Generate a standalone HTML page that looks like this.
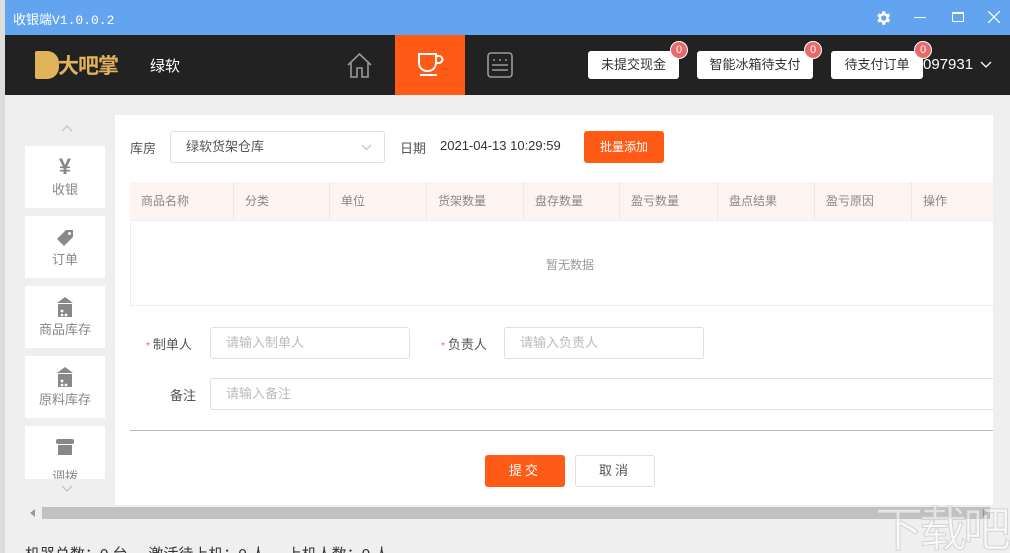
<!DOCTYPE html>
<html><head><meta charset="utf-8"><style>
*{margin:0;padding:0;box-sizing:border-box}
html,body{width:1010px;height:553px;overflow:hidden}
body{background:#efefef;font-family:"Liberation Sans","Noto Sans CJK SC",sans-serif;position:relative;font-size:13px;color:#333}
.a{position:absolute}
.btn{position:absolute;top:51px;height:28px;background:#fff;border-radius:3px;font-size:13px;color:#333;text-align:center;line-height:28px}
.badge{position:absolute;width:18px;height:18px;border-radius:9px;background:#e86a6a;border:1px solid #fff;color:#fff;font-size:11px;text-align:center;line-height:16px;top:-10px;right:-9px}
.nav{position:absolute;left:25px;width:80px;height:62px;background:#fff;text-align:center;color:#888;font-size:13px}
.nav span{position:absolute;left:0;right:0;bottom:10px}
.th{position:absolute;top:182px;height:39px;line-height:39px;font-size:12px;color:#888;border-right:1px solid #f0e6e4;padding-left:11px}
.inp{position:absolute;height:32px;border:1px solid #dcdfe6;border-radius:3px;background:#fff;color:#bbb;font-size:13px;line-height:30px;padding-left:15px}
.lbl{position:absolute;font-size:13px;color:#555}
.star{color:#e86a6a;font-size:10px;margin-right:3px}
</style></head><body>
<div class="a" style="left:0;top:0;width:5px;height:553px;background:#ddd"></div>
<div class="a" style="left:5px;top:0;width:1005px;height:35px;background:#63a4f0"></div>
<div class="a" style="left:13px;top:9px;color:#fff;font-family:'Liberation Mono','Noto Sans CJK SC',monospace;font-size:13px">收银端V1.0.0.2</div>
<svg class="a" style="left:874px;top:9px" width="18" height="18" viewBox="0 0 24 24"><path fill="#fff" d="M19.4 13a7.5 7.5 0 000-2l2.1-1.6-2-3.5-2.5 1a7 7 0 00-1.7-1L15 3h-4l-.4 2.9a7 7 0 00-1.7 1l-2.5-1-2 3.5L6.6 11a7.5 7.5 0 000 2l-2.1 1.6 2 3.5 2.5-1a7 7 0 001.7 1L11 21h4l.4-2.9a7 7 0 001.7-1l2.5 1 2-3.5zM13 15.5a3.5 3.5 0 110-7 3.5 3.5 0 010 7z"/></svg>
<div class="a" style="left:914px;top:17px;width:12px;height:1px;background:#fff"></div>
<div class="a" style="left:952px;top:12px;width:12px;height:10px;border:1px solid #fff;border-top-width:2px"></div>
<svg class="a" style="left:988px;top:11px" width="12" height="12"><path d="M0 0L12 12M12 0L0 12" stroke="#fff" stroke-width="1.2"/></svg>

<div class="a" style="left:5px;top:35px;width:1005px;height:60px;background:#222"></div>
<div class="a" style="left:35px;top:51px;width:24px;height:28px;background:#e1b35a;border-radius:2px 12px 12px 2px"></div>
<div class="a" style="left:58px;top:50px;color:#e1b35a;font-size:21px;font-weight:bold;letter-spacing:-1px">大吧掌</div>
<div class="a" style="left:150px;top:55px;color:#fff;font-size:15px">绿软</div>
<svg class="a" style="left:346px;top:52px" width="27" height="27" viewBox="0 0 27 27"><path d="M2 13L13.5 2 25 13M5 11v14h6v-9h5v9h6V11" fill="none" stroke="#999" stroke-width="1.6"/></svg>
<div class="a" style="left:395px;top:35px;width:70px;height:60px;background:#ff5a16"></div>
<svg class="a" style="left:416px;top:51px" width="28" height="26" viewBox="0 0 28 26"><path d="M3 3h17v9a8 8 0 01-8 8h-1a8 8 0 01-8-8zM20 5h3a3 3 0 010 7h-3M4 24h17" fill="none" stroke="#fff" stroke-width="2"/></svg>
<svg class="a" style="left:487px;top:52px" width="26" height="26" viewBox="0 0 26 26"><rect x="1" y="1" width="24" height="24" rx="3" fill="none" stroke="#999" stroke-width="1.6"/><path d="M6 8h2M12 8h2M18 8h2M5 13h16M5 18h16" stroke="#999" stroke-width="1.6"/></svg>
<div class="btn" style="left:588px;width:91px">未提交现金<div class="badge">0</div></div>
<div class="btn" style="left:697px;width:116px">智能冰箱待支付<div class="badge">0</div></div>
<div class="btn" style="left:831px;width:92px">待支付订单<div class="badge">0</div></div>
<div class="a" style="left:923px;top:56px;color:#fff;font-size:15px">097931</div>
<svg class="a" style="left:980px;top:61px" width="12" height="8"><path d="M1 1l5 5 5-5" fill="none" stroke="#fff" stroke-width="1.3"/></svg>

<svg class="a" style="left:61px;top:125px" width="12" height="8"><path d="M1 6l5-5 5 5" fill="none" stroke="#bbb"/></svg>
<div class="nav" style="top:146px"><div class="a" style="left:0;right:0;top:8px;font-size:22px;font-weight:bold;color:#888">¥</div><span>收银</span></div>
<div class="nav" style="top:216px"><svg class="a" style="left:31px;top:13px" width="18" height="18" viewBox="0 0 18 18"><path d="M10 1h7v7l-9 9-7-7z" fill="#888"/><circle cx="13.5" cy="4.5" r="1.5" fill="#fff"/></svg><span>订单</span></div>
<div class="nav" style="top:286px"><svg class="a" style="left:31px;top:10px" width="18" height="22" viewBox="0 0 18 22"><path d="M9 1L1 7h16z" fill="#888"/><rect x="2" y="8" width="14" height="13" fill="#888"/><circle cx="6" cy="15" r="1.4" fill="#fff"/><circle cx="6" cy="19" r="1.4" fill="#fff"/><circle cx="10" cy="19" r="1.4" fill="#fff"/></svg><span>商品库存</span></div>
<div class="nav" style="top:356px"><svg class="a" style="left:31px;top:10px" width="18" height="22" viewBox="0 0 18 22"><path d="M9 1L1 7h16z" fill="#888"/><rect x="2" y="8" width="14" height="13" fill="#888"/><circle cx="6" cy="15" r="1.4" fill="#fff"/><circle cx="6" cy="19" r="1.4" fill="#fff"/><circle cx="10" cy="19" r="1.4" fill="#fff"/></svg><span>原料库存</span></div>
<div class="nav" style="top:426px;height:53px;overflow:hidden"><svg class="a" style="left:30px;top:12px" width="20" height="18" viewBox="0 0 20 18"><rect x="1" y="1" width="18" height="5" rx="2" fill="#888"/><rect x="3" y="7" width="14" height="10" fill="#888"/></svg><span style="bottom:-6px">调拨</span></div>
<svg class="a" style="left:61px;top:485px" width="12" height="8"><path d="M1 1l5 5 5-5" fill="none" stroke="#bbb"/></svg>

<div class="a" style="left:115px;top:115px;width:878px;height:390px;background:#fff"></div>
<div class="lbl" style="left:130px;top:138px">库房</div>
<div class="inp" style="left:170px;top:131px;width:215px;color:#555">绿软货架仓库<svg class="a" style="right:12px;top:12px" width="11" height="7"><path d="M1 1l4.5 4.5L10 1" fill="none" stroke="#bbb"/></svg></div>
<div class="lbl" style="left:400px;top:138px">日期</div>
<div class="lbl" style="left:440px;top:138px;color:#333">2021-04-13 10:29:59</div>
<div class="a" style="left:584px;top:131px;width:80px;height:32px;background:#ff5a16;border-radius:3px;color:#fff;font-size:12px;text-align:center;line-height:32px">批量添加</div>

<div class="a" style="left:130px;top:182px;width:863px;height:124px;border:1px solid #ebeef5;border-right:none"></div>
<div class="a" style="left:130px;top:182px;width:863px;height:39px;background:#fdf4f2;border-bottom:1px solid #ebeef5"></div>
<div class="th" style="left:130px;width:104px">商品名称</div>
<div class="th" style="left:234px;width:96px">分类</div>
<div class="th" style="left:330px;width:97px">单位</div>
<div class="th" style="left:427px;width:97px">货架数量</div>
<div class="th" style="left:524px;width:96px">盘存数量</div>
<div class="th" style="left:620px;width:98px">盈亏数量</div>
<div class="th" style="left:718px;width:97px">盘点结果</div>
<div class="th" style="left:815px;width:97px">盈亏原因</div>
<div class="th" style="left:912px;width:81px;border:none">操作</div>
<div class="a" style="left:546px;top:256px;font-size:12px;color:#999">暂无数据</div>

<div class="lbl" style="left:146px;top:334px"><span class="star">*</span>制单人</div>
<div class="inp" style="left:210px;top:327px;width:200px">请输入制单人</div>
<div class="lbl" style="left:441px;top:334px"><span class="star">*</span>负责人</div>
<div class="inp" style="left:504px;top:327px;width:200px">请输入负责人</div>
<div class="lbl" style="left:170px;top:385px">备注</div>
<div class="inp" style="left:210px;top:378px;width:783px;border-right:none;border-radius:3px 0 0 3px">请输入备注</div>
<div class="a" style="left:130px;top:430px;width:863px;height:1px;background:#bbb"></div>
<div class="a" style="left:485px;top:455px;width:80px;height:32px;background:#ff5a16;border-radius:3px;color:#fff;text-align:center;line-height:32px;letter-spacing:3px">提交</div>
<div class="a" style="left:575px;top:455px;width:80px;height:32px;border:1px solid #dcdfe6;border-radius:3px;color:#555;text-align:center;line-height:30px;letter-spacing:3px">取消</div>

<div class="a" style="left:42px;top:507px;width:948px;height:12px;background:#c1c1c1"></div>
<svg class="a" style="left:30px;top:509px" width="6" height="8"><path d="M5 0L0 4l5 4z" fill="#999"/></svg>
<svg class="a" style="left:983px;top:509px" width="6" height="8"><path d="M0 0l5 4-5 4z" fill="#555"/></svg>
<div class="a" style="left:25px;top:543px;font-size:15px;color:#333;white-space:nowrap">机器总数：0 台&nbsp;&nbsp;&nbsp;&nbsp;&nbsp;激活待上机：0 人&nbsp;&nbsp;&nbsp;&nbsp;&nbsp;上机人数：0 人</div>
<div class="a" style="left:875px;top:490px;font-size:48px;color:rgba(255,255,255,.55);-webkit-text-stroke:1px rgba(190,190,190,.6);letter-spacing:-4px">下载吧</div>
</body></html>
